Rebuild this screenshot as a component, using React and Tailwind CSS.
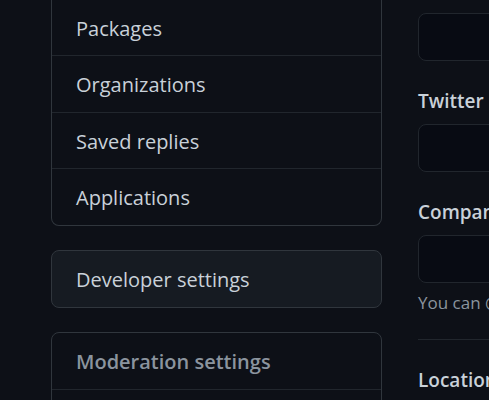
const accountLinks = ["Packages", "Organizations", "Saved replies", "Applications"];

function TextField({ id, label, children }) {
  return (
    <div>
      <label htmlFor={id} className="block h-[39px] text-[19px] leading-8 font-semibold">
        {label}
      </label>
      <input
        id={id}
        type="text"
        className="block h-12 w-full rounded-lg border border-[#21262d] bg-[#080b13] px-4 text-[20px] outline-none"
      />
      {children}
    </div>
  );
}

export default function App() {
  return (
    <div className="h-screen overflow-hidden bg-[#0d1017] font-['Open_Sans','Noto_Sans',sans-serif] text-[#c9d1d9]">
      <div className="flex min-w-[960px] gap-9 pl-[51px]">
        <aside className="flex w-[331px] shrink-0 flex-col gap-6 text-[20px] leading-8">
          <nav
            aria-label="Account"
            className="grid grid-rows-[56px_57px_56px_56px] rounded-b-lg border-x border-b border-[#30363d]"
          >
            {accountLinks.map((name) => (
              <a
                key={name}
                href="#"
                className="flex items-center border-b border-[#21262d] px-6 pt-0.5 last:border-b-0"
              >
                {name}
              </a>
            ))}
          </nav>
          <a
            href="#"
            className="flex h-[58px] items-center rounded-lg border border-[#30363d] bg-[#161b22] px-6 pt-0.5"
          >
            Developer settings
          </a>
          <nav aria-label="Moderation settings" className="rounded-t-lg border border-[#30363d]">
            <h2 className="flex h-[57px] items-center border-b border-[#21262d] px-6 pt-0.5 font-semibold text-[#8b949e]">
              Moderation settings
            </h2>
            <div className="h-14" />
          </nav>
        </aside>
        <main className="flex flex-1 flex-col gap-6 pt-[13px]">
          <input
            type="text"
            aria-label="URL"
            className="block h-12 w-full rounded-lg border border-[#21262d] bg-[#080b13] px-4 text-[20px] outline-none"
          />
          <TextField id="twitter" label="Twitter username" />
          <TextField id="company" label="Company">
            <p className="mt-2 text-[17px] leading-6 text-[#8b949e]">
              You can @mention your company’s GitHub organization to link it.
            </p>
          </TextField>
          <hr className="border-[#21262d]" />
          <TextField id="location" label="Location" />
        </main>
      </div>
    </div>
  );
}
